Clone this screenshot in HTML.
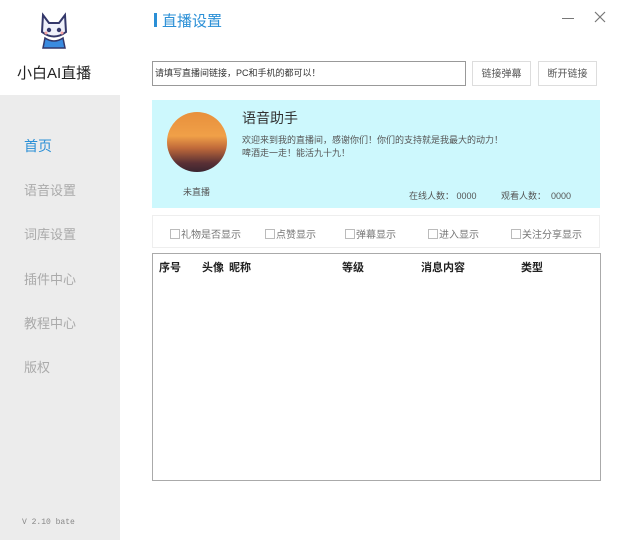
<!DOCTYPE html>
<html><head><meta charset="utf-8"><style>
body{margin:0;width:627px;height:540px;position:relative;background:#fff;font-family:"Liberation Sans","Noto Sans CJK SC",sans-serif;overflow:hidden}
.a{position:absolute;white-space:nowrap}
.side{position:absolute;left:0;top:95px;width:120px;height:445px;background:#ececec}
.menu{position:absolute;left:24px;font-size:13px;color:#aaa}
.btn{position:absolute;top:61px;height:25px;width:59px;border:1px solid #ddd;background:#fff;font-size:10px;color:#555;text-align:center;line-height:25px;box-sizing:border-box}
.cb{position:absolute;top:226px;font-size:10px;color:#777}
.cb i{display:inline-block;width:8px;height:8px;border:1px solid #bbb;margin-right:1px;vertical-align:-1px}
.th{position:absolute;top:259px;font-size:11px;font-weight:bold;color:#222}
</style></head><body>
<svg class="a" style="left:38px;top:12px" width="32" height="40" viewBox="0 0 32 40">
<path d="M5 3 L11 11 L21 11 L27 3 L28 20 Q16 29 4 20 Z" fill="#eef0fa" stroke="#33376a" stroke-width="2"/>
<circle cx="11" cy="18" r="2.2" fill="#33376a"/><circle cx="21" cy="18" r="2.2" fill="#33376a"/>
<circle cx="8" cy="21" r="1.5" fill="#f4a0a0"/><circle cx="24" cy="21" r="1.5" fill="#f4a0a0"/>
<path d="M7 26 Q16 32 25 26 L27 36 L5 36 Z" fill="#3a8be0" stroke="#33376a" stroke-width="1.5"/>
</svg>
<div class="a" style="left:17px;top:62px;font-size:15px;color:#222">小白AI直播</div>
<div class="side"></div>
<div class="menu a" style="top:136px;color:#2a8fd6;font-size:14px">首页</div>
<div class="menu a" style="top:180px">语音设置</div>
<div class="menu a" style="top:224px">词库设置</div>
<div class="menu a" style="top:269px">插件中心</div>
<div class="menu a" style="top:313px">教程中心</div>
<div class="menu a" style="top:357px">版权</div>
<div class="a" style="left:22px;top:518px;font-size:8px;color:#888;font-family:'Liberation Mono',monospace">V 2.10 bate</div>
<div class="a" style="left:154px;top:13px;width:3px;height:14px;background:#2a8fd6"></div>
<div class="a" style="left:162px;top:10px;font-size:15px;color:#2a8fd6">直播设置</div>
<div class="a" style="left:562px;top:18px;width:12px;height:1px;background:#777"></div>
<svg class="a" style="left:594px;top:11px" width="12" height="12"><path d="M1 1L11 11M11 1L1 11" stroke="#777" stroke-width="1.2"/></svg>
<div class="a" style="left:152px;top:61px;width:314px;height:25px;border:1px solid #999;box-sizing:border-box;font-size:9px;color:#333;line-height:23px;padding-left:2px">请填写直播间链接，PC和手机的都可以！</div>
<div class="btn" style="left:472px">链接弹幕</div>
<div class="btn" style="left:538px">断开链接</div>
<div class="a" style="left:152px;top:100px;width:448px;height:108px;background:#cdf8fd"></div>
<div class="a" style="left:167px;top:112px;width:60px;height:60px;border-radius:50%;background:linear-gradient(#e8903c 0%,#f0a048 40%,#c06a3a 60%,#5a3035 85%,#3a2530 100%)"></div>
<div class="a" style="left:183px;top:185px;font-size:9px;color:#555">未直播</div>
<div class="a" style="left:242px;top:108px;font-size:14px;color:#333">语音助手</div>
<div class="a" style="left:242px;top:134px;font-size:9px;color:#555;line-height:13px">欢迎来到我的直播间，感谢你们！你们的支持就是我最大的动力！<br>啤酒走一走！能活九十九！</div>
<div class="a" style="left:409px;top:189px;font-size:9px;color:#555">在线人数：&nbsp;0000</div>
<div class="a" style="left:501px;top:189px;font-size:9px;color:#555">观看人数：&nbsp;&nbsp;0000</div>
<div class="a" style="left:152px;top:215px;width:448px;height:33px;border:1px solid #eee;box-sizing:border-box"></div>
<div class="cb" style="left:170px"><i></i>礼物是否显示</div>
<div class="cb" style="left:265px"><i></i>点赞显示</div>
<div class="cb" style="left:345px"><i></i>弹幕显示</div>
<div class="cb" style="left:428px"><i></i>进入显示</div>
<div class="cb" style="left:511px"><i></i>关注分享显示</div>
<div class="a" style="left:152px;top:253px;width:449px;height:228px;border:1px solid #aaa;box-sizing:border-box"></div>
<div class="th" style="left:159px">序号</div>
<div class="th" style="left:202px">头像</div>
<div class="th" style="left:229px">昵称</div>
<div class="th" style="left:342px">等级</div>
<div class="th" style="left:421px">消息内容</div>
<div class="th" style="left:521px">类型</div>
</body></html>
